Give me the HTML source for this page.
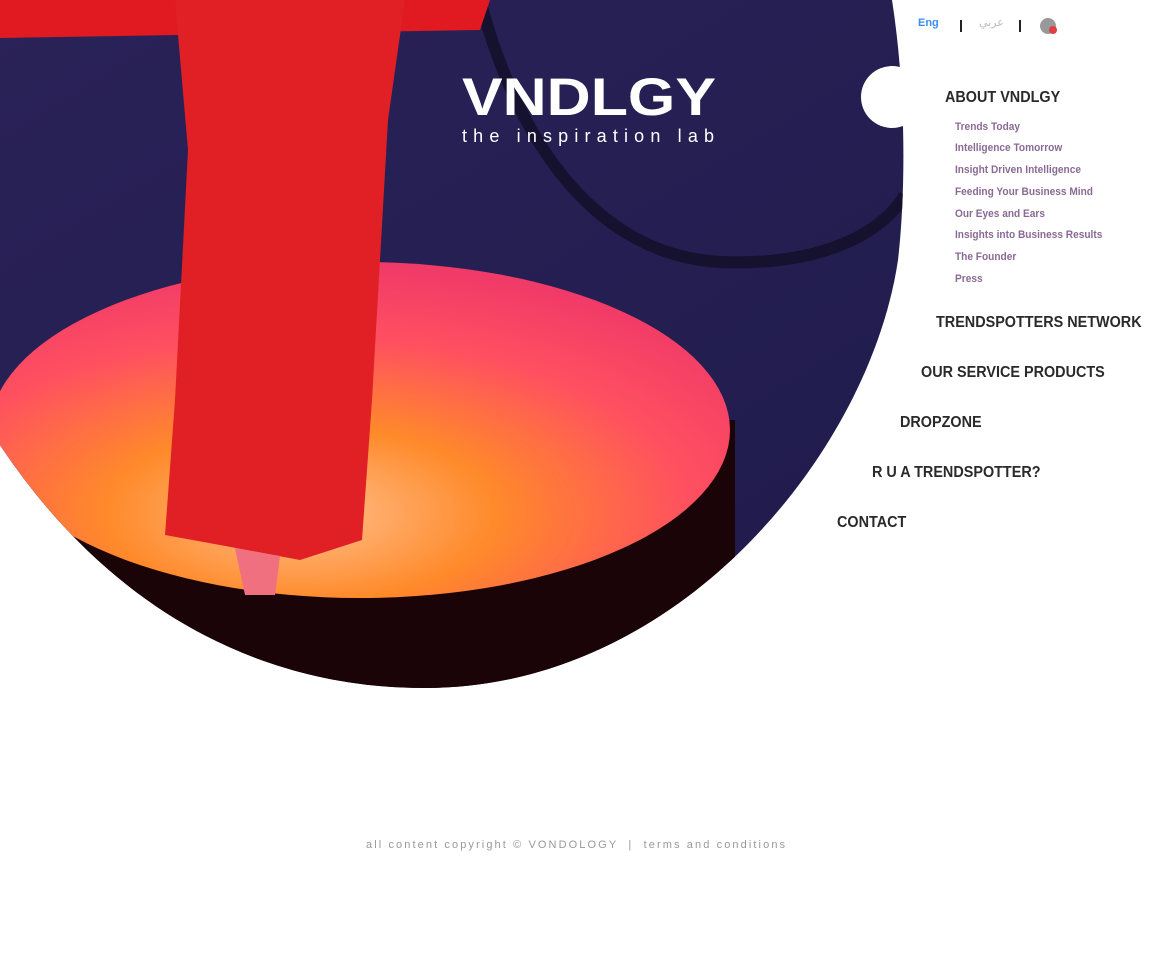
<!DOCTYPE html>
<html><head><meta charset="utf-8"><style>
html,body{margin:0;padding:0;background:#fff;width:1150px;height:965px;overflow:hidden;position:relative;font-family:"Liberation Sans",sans-serif}
.abs{position:absolute}
.h{position:absolute;font-weight:bold;font-size:16px;color:#2a2a2a;white-space:nowrap;transform:scaleX(.9);transform-origin:0 0}
.s{position:absolute;left:955px;font-weight:bold;font-size:11px;color:#8a6a94;white-space:nowrap;transform:scaleX(.92);transform-origin:0 0}
</style></head><body>
<svg class="abs" style="left:0;top:0" width="1150" height="700" viewBox="0 0 1150 700">
<defs>
<clipPath id="c"><path d="M0,0 L892,0 C906,90 906,190 898,260 C870,450 680,688 425,688 C260,688 110,610 0,445 Z"/></clipPath>
<radialGradient id="bowl" cx="0.42" cy="0.75" r="0.75">
<stop offset="0" stop-color="#ffc090"/><stop offset="0.35" stop-color="#ff8a2a"/><stop offset="0.7" stop-color="#ff5060"/><stop offset="1" stop-color="#f03a68"/></radialGradient>
<linearGradient id="bg" x1="0" y1="0" x2="1" y2="1"><stop offset="0" stop-color="#2a2258"/><stop offset="1" stop-color="#1e1a4a"/></linearGradient>
</defs>
<g clip-path="url(#c)">
<rect width="1150" height="700" fill="url(#bg)"/>
<path d="M480,0 C520,150 600,255 720,262 C820,266 880,235 905,195" stroke="#15112f" stroke-width="12" fill="none"/>
<path d="M0,0 L490,0 L480,30 L0,38 Z" fill="#e01a20"/>
<rect x="-10" y="420" width="745" height="290" fill="#1a0408"/>
<ellipse cx="360" cy="430" rx="370" ry="168" fill="url(#bowl)"/>
<path d="M175,0 L405,0 L388,120 L372,400 L362,540 L300,560 L220,545 L165,535 L175,400 L188,150 Z" fill="#e02024"/>
<path d="M235,548 L245,595 L275,595 L280,556 Z" fill="#f07080"/>
</g>
<circle cx="892" cy="97" r="31" fill="#fff"/>
<text x="462" y="115" font-family="Liberation Sans" font-weight="bold" font-size="53" fill="#fff" textLength="254" lengthAdjust="spacingAndGlyphs">VNDLGY</text>
<text x="462" y="142" font-family="Liberation Sans" font-size="18" fill="#fff" textLength="252">the inspiration lab</text>
</svg>
<div class="abs" style="left:918px;top:17px;font-size:11px;font-weight:bold;color:#3a8ef0">Eng</div>
<div class="abs" style="left:960px;top:20px;width:2px;height:12px;background:#222"></div>
<div class="abs" style="left:979px;top:16px;font-size:11px;color:#bbb;font-family:'DejaVu Sans',sans-serif">عربي</div>
<div class="abs" style="left:1019px;top:20px;width:2px;height:12px;background:#222"></div>
<div class="abs" style="left:1040px;top:18px;width:16px;height:16px;border-radius:50%;background:#999"></div>
<div class="abs" style="left:1049px;top:26px;width:8px;height:8px;border-radius:50%;background:#e04040"></div>
<div class="h" style="left:945px;top:89px">ABOUT VNDLGY</div>
<div class="s" style="top:121px">Trends Today</div>
<div class="s" style="top:142px">Intelligence Tomorrow</div>
<div class="s" style="top:164px">Insight Driven Intelligence</div>
<div class="s" style="top:186px">Feeding Your Business Mind</div>
<div class="s" style="top:208px">Our Eyes and Ears</div>
<div class="s" style="top:229px">Insights into Business Results</div>
<div class="s" style="top:251px">The Founder</div>
<div class="s" style="top:273px">Press</div>
<div class="h" style="left:936px;top:314px">TRENDSPOTTERS NETWORK</div>
<div class="h" style="left:921px;top:364px">OUR SERVICE PRODUCTS</div>
<div class="h" style="left:900px;top:414px">DROPZONE</div>
<div class="h" style="left:872px;top:464px">R U A TRENDSPOTTER?</div>
<div class="h" style="left:837px;top:514px">CONTACT</div>
<div class="abs" style="left:366px;top:839px;font-size:11px;color:#999;letter-spacing:2.1px;white-space:nowrap">all content copyright © VONDOLOGY &nbsp;| &nbsp;terms and conditions</div>
</body></html>
